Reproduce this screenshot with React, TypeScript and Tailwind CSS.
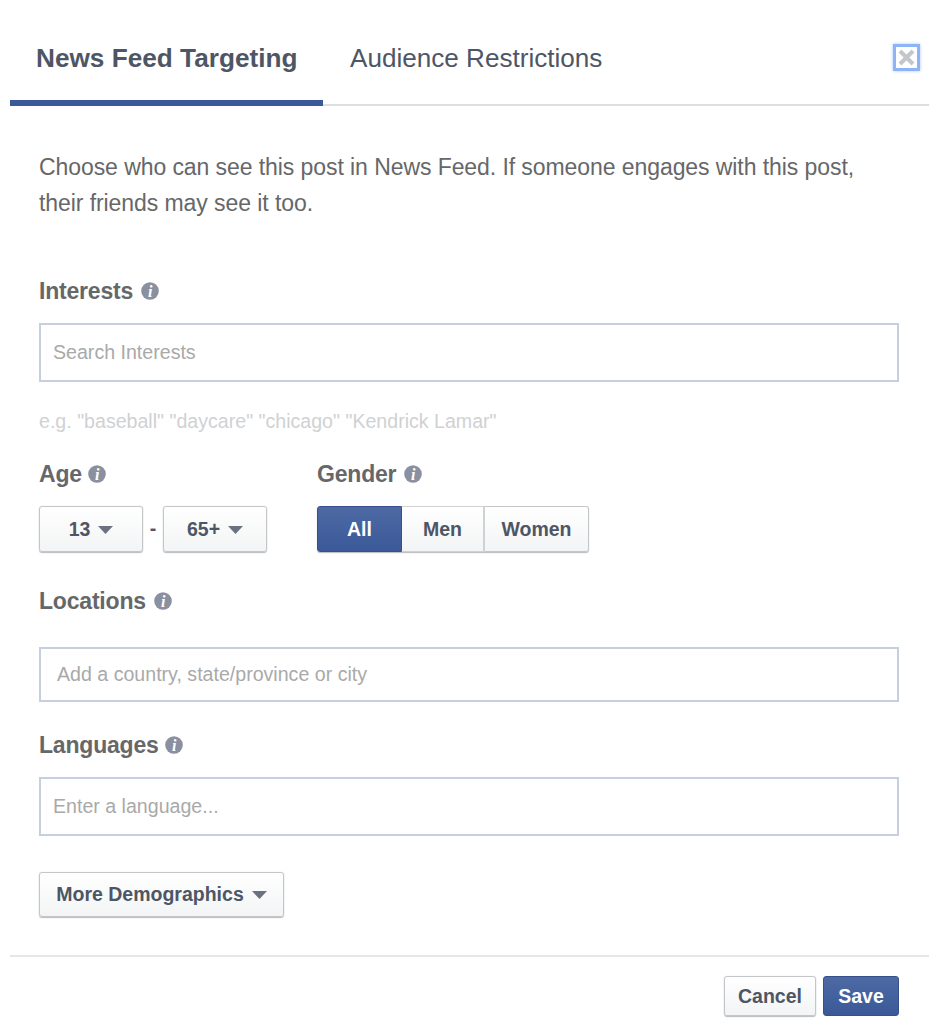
import type { ReactNode } from "react"

const font = "font-['Liberation_Sans',Arial,sans-serif]"

function InfoIcon() {
  return (
    <svg width="18" height="18" viewBox="0 0 18 18" className="shrink-0">
      <circle cx="9" cy="9" r="8.8" fill="#8b90a0" />
      <text
        x="9"
        y="14.5"
        textAnchor="middle"
        fontSize="16"
        fontWeight="700"
        fontStyle="italic"
        fontFamily="'Liberation Serif', serif"
        fill="#ffffff"
      >
        i
      </text>
    </svg>
  )
}

function Caret() {
  return (
    <svg width="15" height="8" viewBox="0 0 15 8" className="shrink-0">
      <path d="M0 0h15L7.5 8z" fill="#6a7180" />
    </svg>
  )
}

function Label({ children, gap = "gap-[8px]" }: { children: ReactNode; gap?: string }) {
  return (
    <div className={`flex items-center h-[28px] text-[23px] font-bold text-[#666769] tracking-[-0.2px] ${gap}`}>
      {children}
      <InfoIcon />
    </div>
  )
}

function TextBox({ placeholder, height, pad }: { placeholder: string; height: string; pad: string }) {
  return (
    <div
      className={`flex items-center border-2 border-[#c5cfe0] bg-white text-[19.6px] text-[#a9a9a9] ${height} ${pad}`}
    >
      {placeholder}
    </div>
  )
}

function GreyButton({ children, className }: { children: ReactNode; className: string }) {
  return (
    <div
      className={`flex items-center justify-center pt-px rounded-[3px] border border-[#c4c6ca] shadow-[0_1px_1px_#b9bbbf,0_0_1px_#c4c6ca] bg-gradient-to-b from-white to-[#f3f4f5] font-bold text-[19.5px] text-[#4e5665] ${className}`}
    >
      {children}
    </div>
  )
}

export default function App() {
  return (
    <div className={`${font} w-[942px] h-[1030px] bg-white overflow-hidden px-[10px]`}>
      {/* tabs */}
      <div className="relative flex h-[106px] w-[919px] border-b-2 border-[#dddfe2]">
        <div className="flex w-[313px] h-[106px] pl-[26px] pt-[40px] border-b-[6px] border-[#3b5998] text-[26.2px] leading-[36px] font-bold text-[#4e5665]">
          News Feed Targeting
        </div>
        <div className="pl-[27px] pt-[40px] text-[26.1px] leading-[36px] text-[#4e5665]">Audience Restrictions</div>
        <div className="absolute left-[883px] top-[44px] flex items-center justify-center w-[27px] h-[27px] border-[3px] border-[#8fb4f5] shadow-[0_0_3px_#a9c6f8]">
          <svg width="19" height="19" viewBox="0 0 19 19">
            <path d="M3 3l13 13M16 3L3 16" stroke="#c3c6cc" strokeWidth="4" />
          </svg>
        </div>
      </div>

      <div className="flex flex-col w-[919px] pl-[29px] pr-[30px]">
        <p className="mt-[43px] text-[23px] leading-[36px] text-[#666769] tracking-[-0.075px]">
          Choose who can see this post in News Feed. If someone engages with this post,
          <br />
          their friends may see it too.
        </p>

        <div className="mt-[56px]">
          <Label>Interests</Label>
        </div>
        <div className="mt-[18px]">
          <TextBox placeholder="Search Interests" height="h-[59px]" pad="pl-[12px]" />
        </div>
        <div className="mt-[28px] h-[22px] text-[19.6px] leading-[22px] text-[#d0d1d3]">
          e.g. "baseball" "daycare" "chicago" "Kendrick Lamar"
        </div>

        {/* age + gender */}
        <div className="mt-[28px] flex">
          <div className="w-[278px]">
            <Label gap="gap-[6px]">Age</Label>
            <div className="mt-[18px] flex items-center">
              <GreyButton className="w-[104px] h-[46px] gap-[8px]">
                13 <Caret />
              </GreyButton>
              <span className="w-[20px] text-center font-bold text-[19.5px] text-[#4e5665]">-</span>
              <GreyButton className="w-[104px] h-[46px] gap-[8px]">
                65+ <Caret />
              </GreyButton>
            </div>
          </div>
          <div>
            <Label>Gender</Label>
            <div className="mt-[18px] flex h-[46px] rounded-[3px] shadow-[0_1px_1px_#b9bbbf]">
              <div className="flex items-center justify-center pt-px w-[85px] rounded-l-[3px] bg-gradient-to-b from-[#4d6aa4] to-[#3b5998] border border-[#35508a] font-bold text-[19.5px] text-white">
                All
              </div>
              <div className="flex items-center justify-center pt-px w-[83px] border-y border-r-2 border-[#cfd1d5] bg-gradient-to-b from-white to-[#f3f4f5] font-bold text-[19.5px] text-[#4e5665]">
                Men
              </div>
              <div className="flex items-center justify-center pt-px w-[104px] rounded-r-[3px] border-y border-r border-[#c4c6ca] bg-gradient-to-b from-white to-[#f3f4f5] font-bold text-[19.5px] text-[#4e5665]">
                Women
              </div>
            </div>
          </div>
        </div>

        <div className="mt-[35px]">
          <Label>Locations</Label>
        </div>
        <div className="mt-[32px]">
          <TextBox placeholder="Add a country, state/province or city" height="h-[55px]" pad="pl-[16px]" />
        </div>

        <div className="mt-[29px]">
          <Label gap="gap-[6px]">Languages</Label>
        </div>
        <div className="mt-[18px]">
          <TextBox placeholder="Enter a language..." height="h-[59px]" pad="pl-[12px]" />
        </div>

        <div className="mt-[36px]">
          <GreyButton className="w-[245px] h-[45px] gap-[8px]">
            More Demographics <Caret />
          </GreyButton>
        </div>
      </div>

      {/* footer */}
      <div className="mt-[38px] w-[919px] border-t-2 border-[#e5e6e9] pt-[19px] pr-[30px] flex justify-end gap-[7px]">
        <GreyButton className="w-[92px] h-[40px]">Cancel</GreyButton>
        <div className="flex items-center justify-center pt-px w-[76px] h-[40px] rounded-[3px] border border-[#35508a] bg-gradient-to-b from-[#4d6aa4] to-[#3b5998] font-bold text-[19.5px] text-white">
          Save
        </div>
      </div>
    </div>
  )
}
